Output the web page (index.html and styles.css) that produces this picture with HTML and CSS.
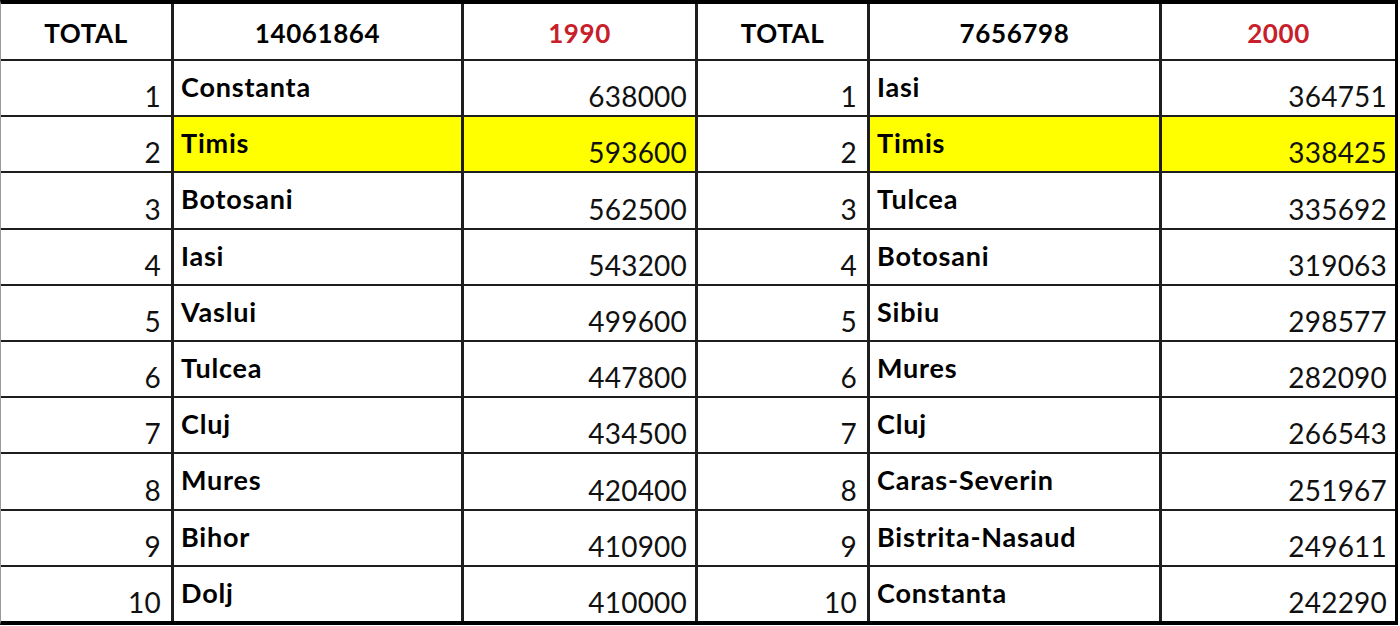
FILE: index.html
```html
<!DOCTYPE html>
<html>
<head>
<meta charset="utf-8">
<link rel="stylesheet" href="styles.css">
</head>
<body>
<div class="sheet">
  <div class="cell hdr">TOTAL</div><div class="cell hdr">14061864</div><div class="cell hdr year">1990</div>
  <div class="cell hdr">TOTAL</div><div class="cell hdr">7656798</div><div class="cell hdr year">2000</div>

  <div class="cell idx">1</div><div class="cell name">Constanta</div><div class="cell val">638000</div>
  <div class="cell idx">1</div><div class="cell name">Iasi</div><div class="cell val">364751</div>

  <div class="cell idx">2</div><div class="cell name hl">Timis</div><div class="cell val hl">593600</div>
  <div class="cell idx">2</div><div class="cell name hl">Timis</div><div class="cell val hl">338425</div>

  <div class="cell idx">3</div><div class="cell name">Botosani</div><div class="cell val">562500</div>
  <div class="cell idx">3</div><div class="cell name">Tulcea</div><div class="cell val">335692</div>

  <div class="cell idx">4</div><div class="cell name">Iasi</div><div class="cell val">543200</div>
  <div class="cell idx">4</div><div class="cell name">Botosani</div><div class="cell val">319063</div>

  <div class="cell idx">5</div><div class="cell name">Vaslui</div><div class="cell val">499600</div>
  <div class="cell idx">5</div><div class="cell name">Sibiu</div><div class="cell val">298577</div>

  <div class="cell idx">6</div><div class="cell name">Tulcea</div><div class="cell val">447800</div>
  <div class="cell idx">6</div><div class="cell name">Mures</div><div class="cell val">282090</div>

  <div class="cell idx">7</div><div class="cell name">Cluj</div><div class="cell val">434500</div>
  <div class="cell idx">7</div><div class="cell name">Cluj</div><div class="cell val">266543</div>

  <div class="cell idx">8</div><div class="cell name">Mures</div><div class="cell val">420400</div>
  <div class="cell idx">8</div><div class="cell name">Caras-Severin</div><div class="cell val">251967</div>

  <div class="cell idx">9</div><div class="cell name">Bihor</div><div class="cell val">410900</div>
  <div class="cell idx">9</div><div class="cell name">Bistrita-Nasaud</div><div class="cell val">249611</div>

  <div class="cell idx">10</div><div class="cell name">Dolj</div><div class="cell val">410000</div>
  <div class="cell idx">10</div><div class="cell name">Constanta</div><div class="cell val">242290</div>
</div>
</body>
</html>
```
FILE: styles.css
```css
html, body {
  margin: 0;
  padding: 0;
  background: #ffffff;
}

body {
  width: 1400px;
  height: 626px;
  overflow: hidden;
  font-family: Lato, "Open Sans", "Liberation Sans", sans-serif;
  color: #000000;
}

.sheet {
  width: 1394px;
  display: grid;
  grid-template-columns: 170px 287px 231px 169px 289px 233px;
  grid-template-rows: 55px repeat(10, 54.2px);
  column-gap: 3px;
  row-gap: 2px;
  background: #1e1e1e;
  border-top: 4px solid #000000;
  border-bottom: 4px solid #000000;
  border-left: 1px solid #9a9a9a;
  border-right: 3px solid #000000;
}

.cell {
  background: #ffffff;
  display: flex;
  line-height: 1;
  white-space: nowrap;
  overflow: hidden;
}

.hdr {
  justify-content: center;
  align-items: flex-start;
  padding-top: 16px;
  font-weight: 700;
  font-size: 26px;
  letter-spacing: 0.6px;
}

.year {
  color: #c8202a;
}

.idx,
.val {
  justify-content: flex-end;
  align-items: flex-end;
  padding: 0 8px 5px 0;
  font-size: 28px;
  font-weight: 400;
  color: #111111;
  letter-spacing: 0.2px;
}

.idx {
  padding-right: 10px;
}

.name {
  justify-content: flex-start;
  align-items: flex-start;
  padding: 12px 0 0 7px;
  font-size: 27px;
  font-weight: 700;
  letter-spacing: 0.8px;
}

.hl {
  background: #ffff00;
}
```
